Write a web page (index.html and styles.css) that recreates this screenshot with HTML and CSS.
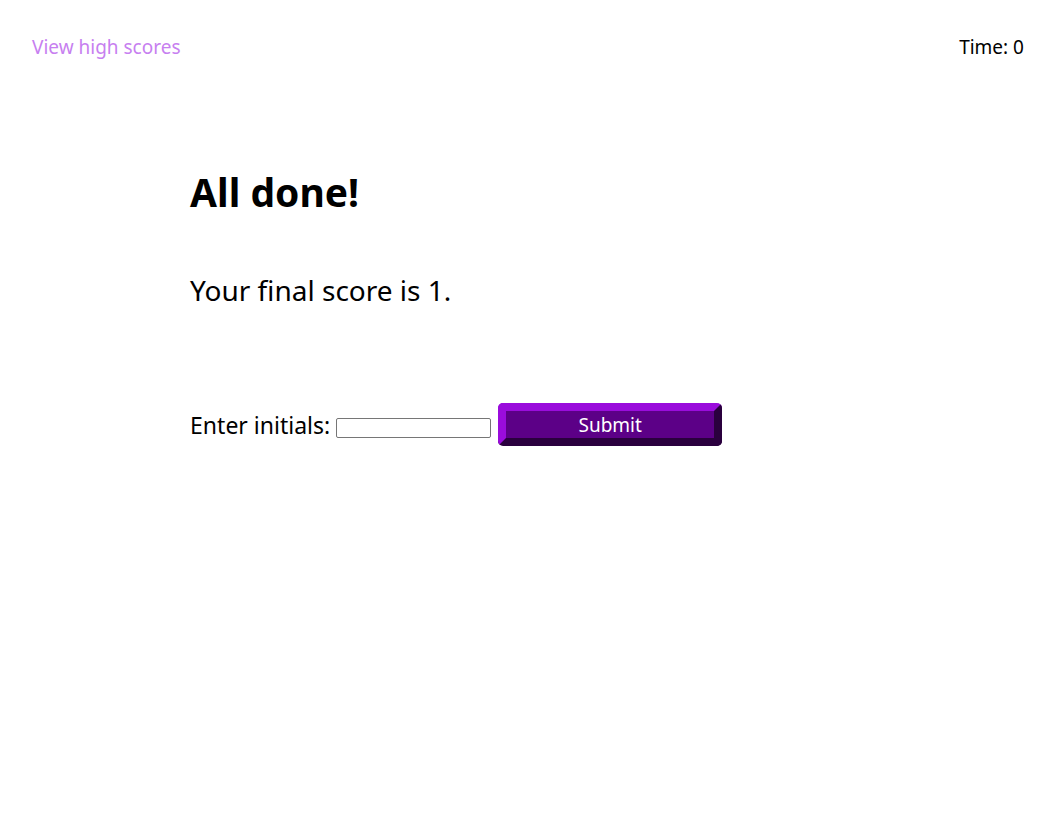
FILE: index.html
```html
<!DOCTYPE html>
<html lang="en">
<head>
<meta charset="utf-8">
<title>Quiz</title>
<link rel="stylesheet" href="styles.css">
</head>
<body>
<header class="top-bar">
  <a class="scores-link" href="#">View high scores</a>
  <div class="timer">Time: 0</div>
</header>
<main class="panel">
  <h1 class="title">All done!</h1>
  <p class="score">Your final score is 1.</p>
  <form class="entry">
    <label class="entry-label" for="initials">Enter initials:</label>
    <input class="entry-input" id="initials" type="text">
    <button class="submit-btn" type="button">Submit</button>
  </form>
</main>
</body>
</html>
```
FILE: styles.css
```css
html, body {
  margin: 0;
  padding: 0;
  background: #ffffff;
}
body {
  font-family: "Noto Sans", "Open Sans", sans-serif;
  color: #000;
}
.top-bar {
  display: flex;
  justify-content: space-between;
  align-items: center;
  padding: 34px 32px 0 32px;
  height: 26px;
  font-size: 19px;
}
.scores-link {
  color: #c77ff0;
  text-decoration: none;
}
.timer {
  color: #000;
}
.panel {
  margin: 0 18%;
  padding-top: 104px;
}
.title {
  margin: 0;
  font-size: 39px;
  font-weight: 700;
  line-height: 56px;
}
.score {
  margin: 51px 0 0 0;
  font-size: 28px;
  line-height: 38px;
}
.entry {
  margin-top: 94px;
  display: flex;
  align-items: center;
}
.entry-label {
  font-size: 23px;
  margin-right: 6px;
}
.entry-input {
  width: 155px;
  height: 20px;
  box-sizing: border-box;
  border: 1px solid #767676;
  border-radius: 2px;
  padding: 1px 2px;
  margin: 6px 7px 0 0;
}
.submit-btn {
  width: 224px;
  height: 43px;
  box-sizing: border-box;
  border-style: solid;
  border-width: 8px;
  border-color: #9a0cdc #2a003e #2a003e #9a0cdc;
  border-radius: 5px;
  background: #5c0087;
  color: #fff;
  font-family: "Noto Sans", "Open Sans", sans-serif;
  font-size: 19px;
  padding: 0;
  line-height: 24px;
}
```
